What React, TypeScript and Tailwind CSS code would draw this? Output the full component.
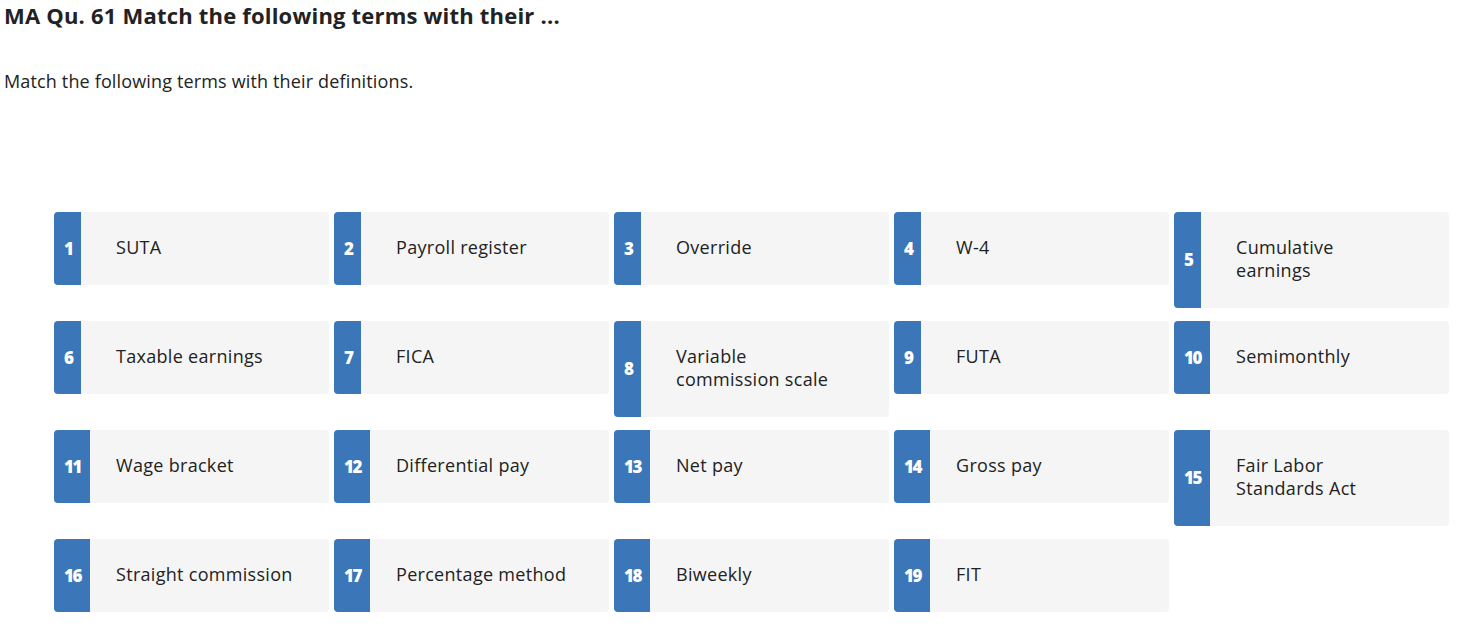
const items: { n: number; lines: string[] }[] = [
  { n: 1, lines: ["SUTA"] },
  { n: 2, lines: ["Payroll register"] },
  { n: 3, lines: ["Override"] },
  { n: 4, lines: ["W-4"] },
  { n: 5, lines: ["Cumulative", "earnings"] },
  { n: 6, lines: ["Taxable earnings"] },
  { n: 7, lines: ["FICA"] },
  { n: 8, lines: ["Variable", "commission scale"] },
  { n: 9, lines: ["FUTA"] },
  { n: 10, lines: ["Semimonthly"] },
  { n: 11, lines: ["Wage bracket"] },
  { n: 12, lines: ["Differential pay"] },
  { n: 13, lines: ["Net pay"] },
  { n: 14, lines: ["Gross pay"] },
  { n: 15, lines: ["Fair Labor", "Standards Act"] },
  { n: 16, lines: ["Straight commission"] },
  { n: 17, lines: ["Percentage method"] },
  { n: 18, lines: ["Biweekly"] },
  { n: 19, lines: ["FIT"] },
];

function Term({ n, lines }: { n: number; lines: string[] }) {
  return (
    <div className="relative flex rounded-[4px] bg-[#f5f5f5]">
      <div className="absolute inset-y-0 left-0 flex items-center rounded-l-[4px] bg-[#3a76b8] pl-[10px] pr-[9px] text-[17px] font-extrabold tracking-[-1.5px] text-white">
        {n}
      </div>
      <div className="whitespace-nowrap pb-[26px] pl-[62px] pt-[24px] text-[18px] leading-[23px] tracking-[0.3px] text-[#222]">
        {lines.map((l, i) => (
          <div key={i}>{l}</div>
        ))}
      </div>
    </div>
  );
}

export default function App() {
  return (
    <div className="min-h-screen bg-white text-[#222]" style={{ fontFamily: "'Open Sans', sans-serif" }}>
      <h1 className="pl-[4px] pt-[1px] text-[22px] font-bold leading-[28px] tracking-[0.2px] text-[#222]">
        MA Qu. 61 Match the following terms with their ...
      </h1>
      <p className="mt-[40px] pl-[4px] text-[18px] leading-[24px] tracking-[0.15px]">
        Match the following terms with their definitions.
      </p>
      <div className="ml-[54px] mt-[119px] grid w-[1395px] grid-cols-5 items-start gap-x-[5px] gap-y-[13px]">
        {items.map((it) => (
          <Term key={it.n} {...it} />
        ))}
      </div>
    </div>
  );
}
